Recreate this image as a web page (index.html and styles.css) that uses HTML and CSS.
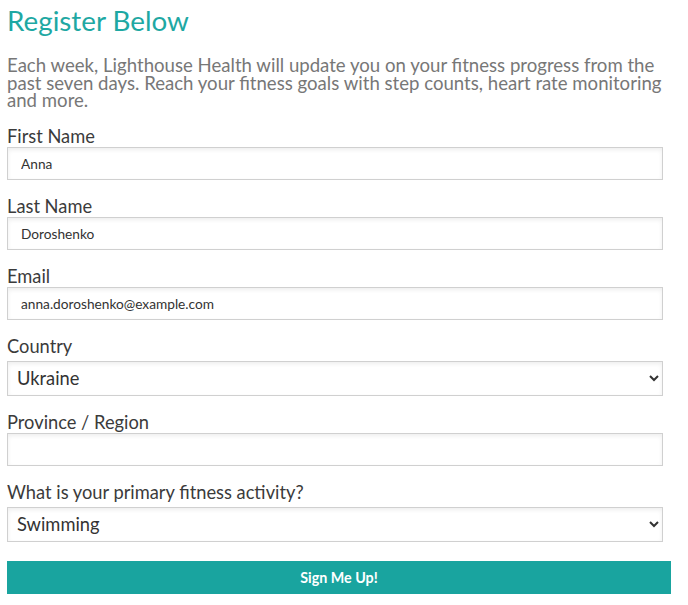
FILE: index.html
```html
<!DOCTYPE html>
<html lang="en">
<head>
<meta charset="utf-8">
<title>Register Below</title>
<link rel="stylesheet" href="styles.css">
</head>
<body>
<main class="page">
  <h1 class="title">Register Below</h1>
  <p class="intro">Each week, Lighthouse Health will update you on your fitness progress from the past seven days. Reach your fitness goals with step counts, heart rate monitoring and more.</p>
  <form class="form">
    <div class="field">
      <label class="label" for="first">First Name</label>
      <input class="input" id="first" type="text" value="Anna">
    </div>
    <div class="field">
      <label class="label" for="last">Last Name</label>
      <input class="input" id="last" type="text" value="Doroshenko">
    </div>
    <div class="field">
      <label class="label" for="email">Email</label>
      <input class="input" id="email" type="email" value="anna.doroshenko@example.com">
    </div>
    <div class="field">
      <label class="label" for="country">Country</label>
      <select class="select" id="country">
        <option>Ukraine</option>
      </select>
    </div>
    <div class="field">
      <label class="label" for="region">Province / Region</label>
      <input class="input" id="region" type="text" value="">
    </div>
    <div class="field">
      <label class="label" for="activity">What is your primary fitness activity?</label>
      <select class="select" id="activity">
        <option>Swimming</option>
      </select>
    </div>
    <button class="submit" type="button">Sign Me Up!</button>
  </form>
</main>
</body>
</html>
```
FILE: styles.css
```css
html, body {
  margin: 0;
  padding: 0;
  background: #ffffff;
}

.page {
  padding: 0 8px 0 7px;
  font-family: Lato, "Liberation Sans", sans-serif;
}

.title {
  margin: 5px 0 0;
  font-size: 27.8px;
  line-height: 32px;
  font-weight: 400;
  color: #1ea8a3;
}

.intro {
  margin: 20px 0 16px;
  font-size: 18.6px;
  line-height: 17.5px;
  color: #777777;
}

.form {
  display: flex;
  flex-direction: column;
}

.field {
  display: flex;
  flex-direction: column;
  margin-bottom: 16px;
}

.label {
  font-size: 18.3px;
  line-height: 21px;
  color: #3b3b3b;
}

.input,
.select {
  box-sizing: border-box;
  width: 656px;
  border: 1px solid #d0d0d0;
  border-radius: 0;
  background: #ffffff;
  box-shadow: inset 0 2px 4px rgba(0, 0, 0, 0.07);
  font-family: Lato, "Liberation Sans", sans-serif;
  color: #333333;
  margin: 0;
  outline: none;
}

.input {
  height: 33px;
  padding: 0 13px;
  font-size: 13.7px;
}

.select {
  height: 35px;
  margin-top: 4px;
  padding: 0 5px;
  font-size: 18.3px;
}

.submit {
  box-sizing: border-box;
  width: 664px;
  height: 33px;
  margin: 3px 0 0;
  border: none;
  border-radius: 0;
  background: #19a49f;
  color: #ffffff;
  font-family: Lato, "Liberation Sans", sans-serif;
  font-size: 14.3px;
  font-weight: 700;
  padding: 0;
}
```
